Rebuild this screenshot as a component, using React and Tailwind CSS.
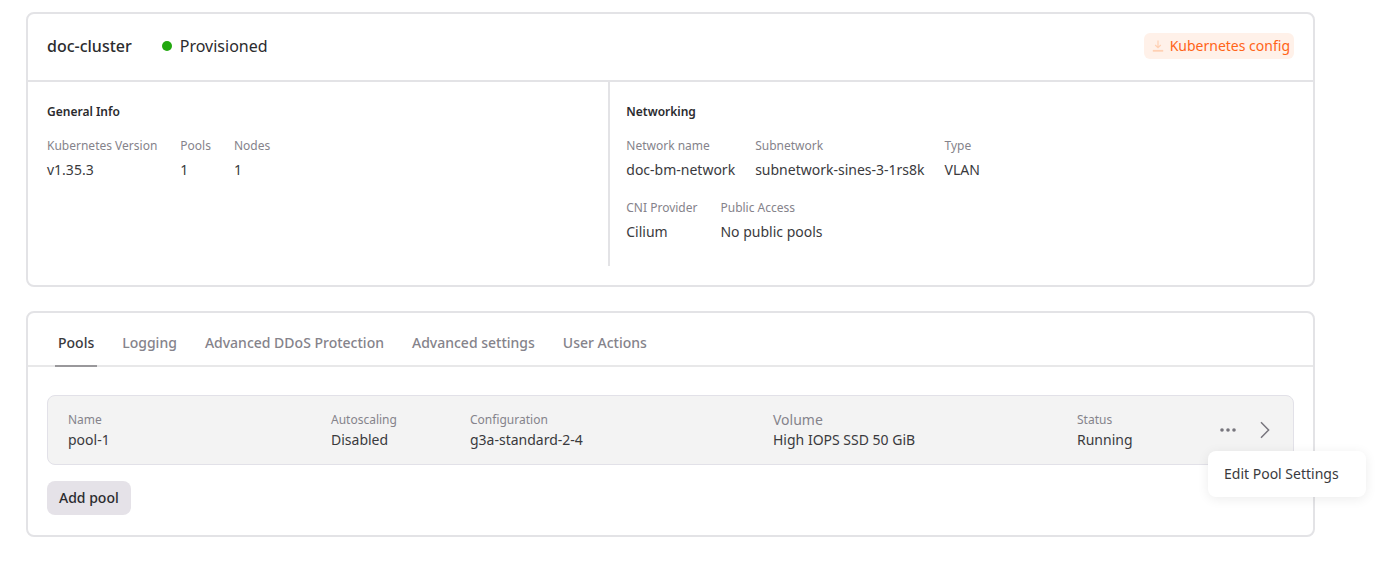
import { useState } from 'react'
import clsx from 'clsx'

const generalInfo = [
  { label: 'Kubernetes Version', value: 'v1.35.3' },
  { label: 'Pools', value: '1' },
  { label: 'Nodes', value: '1' },
]

const networkInfo = [
  { label: 'Network name', value: 'doc-bm-network' },
  { label: 'Subnetwork', value: 'subnetwork-sines-3-1rs8k' },
  { label: 'Type', value: 'VLAN' },
]

const accessInfo = [
  { label: 'CNI Provider', value: 'Cilium' },
  { label: 'Public Access', value: 'No public pools' },
]

const tabs = ['Pools', 'Logging', 'Advanced DDoS Protection', 'Advanced settings', 'User Actions']

const pool = [
  { label: 'Name', value: 'pool-1' },
  { label: 'Autoscaling', value: 'Disabled' },
  { label: 'Configuration', value: 'g3a-standard-2-4' },
  { label: 'Volume', value: 'High IOPS SSD 50 GiB', large: true },
  { label: 'Status', value: 'Running' },
]

function DownloadIcon() {
  return (
    <svg width="12" height="12" viewBox="0 0 12 12" fill="none" stroke="#ffd0b3" strokeWidth="1.2" aria-hidden="true">
      <path d="M6 0.5v7M3.2 5L6 7.7 8.8 5" />
      <path d="M0.8 10.8h10.4" strokeWidth="1.8" />
    </svg>
  )
}

function DotsIcon() {
  return (
    <svg width="16" height="6" viewBox="0 0 16 6" fill="#77757d" aria-hidden="true">
      <circle cx="2" cy="3" r="1.8" />
      <circle cx="8" cy="3" r="1.8" />
      <circle cx="14" cy="3" r="1.8" />
    </svg>
  )
}

function ChevronIcon() {
  return (
    <svg width="10" height="18" viewBox="0 0 10 18" fill="none" stroke="#77757d" strokeWidth="1.5" aria-hidden="true">
      <path d="M1 1.3L8.6 9 1 16.7" />
    </svg>
  )
}

function InfoList({ items, className = 'gap-x-[23px]' }) {
  return (
    <dl className={clsx('flex flex-wrap', className)}>
      {items.map((item) => (
        <div key={item.label}>
          <dt className="text-xs leading-4 text-[#85838b]">{item.label}</dt>
          <dd className="mt-1.5 text-sm leading-5 text-[#3a3a3d]">{item.value}</dd>
        </div>
      ))}
    </dl>
  )
}

export default function App() {
  const [activeTab, setActiveTab] = useState('Pools')
  const [menuOpen, setMenuOpen] = useState(true)

  return (
    <main className="flex flex-col gap-6 bg-white pt-3 pr-[72px] pb-8 pl-[26px] font-['Noto_Sans',sans-serif] text-[#2b2b2e]">
      {/* Cluster summary */}
      <section className="rounded-lg border-2 border-[#e3e3e6] pb-[19px]">
        <header className="flex h-[68px] items-center justify-between border-b-2 border-[#e3e3e6] pr-[19px] pb-0.5 pl-[19px]">
          <div className="flex items-center gap-[30px]">
            <h1 className="text-base leading-5 font-medium">doc-cluster</h1>
            <p className="flex items-center gap-2 text-base leading-5">
              <span className="size-[10px] rounded-full bg-[#22a80f]" />
              Provisioned
            </p>
          </div>
          <button
            type="button"
            className="flex h-[26px] items-center gap-1.5 rounded-md bg-[#fff1e9] pr-1 pl-2 text-sm leading-5 text-[#ff6418]"
          >
            <DownloadIcon />
            Kubernetes config
          </button>
        </header>

        <div className="grid grid-cols-[29fr_35fr]">
          <div className="border-r-2 border-[#e3e3e6] pt-5 pr-5 pb-6 pl-[19px]">
            <h2 className="mb-4 text-xs leading-5 font-semibold">General Info</h2>
            <InfoList items={generalInfo} />
          </div>
          <div className="px-4 pt-5 pb-6">
            <h2 className="mb-4 text-xs leading-5 font-semibold">Networking</h2>
            <InfoList items={networkInfo} className="gap-x-5" />
            <div className="mt-5">
              <InfoList items={accessInfo} />
            </div>
          </div>
        </div>
      </section>

      {/* Tabs and pool list */}
      <section className="rounded-lg border-2 border-[#e3e3e6]">
        <nav className="flex h-[54px] items-stretch gap-[22px] border-b-2 border-[#e8e8e9] pl-[27px]" role="tablist">
          {tabs.map((tab) => (
            <button
              key={tab}
              type="button"
              role="tab"
              aria-selected={activeTab === tab}
              onClick={() => setActiveTab(tab)}
              className={clsx(
                '-mb-0.5 border-b-2 px-[3px] pt-2 text-sm leading-5 font-medium',
                activeTab === tab ? 'border-[#99989b] text-[#3a3a3d]' : 'border-transparent text-[#85838b]'
              )}
            >
              {tab}
            </button>
          ))}
        </nav>

        <div className="px-[19px] pt-7 pb-5">
          <div className="flex h-[70px] items-center rounded-lg border border-[#e2e1e8] bg-[#f3f3f3] pr-3 pl-5">
            <dl className="grid flex-1 grid-cols-[263fr_139fr_303fr_304fr_131fr]">
              {pool.map((field) => (
                <div key={field.label}>
                  <dt className={clsx('leading-5 text-[#85838b]', field.large ? 'text-sm' : 'text-xs')}>
                    {field.label}
                  </dt>
                  <dd className="text-sm leading-5 text-[#3a3a3d]">{field.value}</dd>
                </div>
              ))}
            </dl>
            <div className="relative">
              <button
                type="button"
                aria-label="Pool actions"
                aria-expanded={menuOpen}
                onClick={() => setMenuOpen(!menuOpen)}
                className="flex h-[42px] w-10 items-center justify-center"
              >
                <DotsIcon />
              </button>
              {menuOpen && (
                <div role="menu" className="absolute top-full left-0 rounded-lg bg-white shadow-[0_2px_12px_rgba(0,0,0,0.08)]">
                  <button
                    type="button"
                    role="menuitem"
                    className="h-[46px] w-[158px] px-4 text-left text-sm leading-5 whitespace-nowrap text-[#3a3a3d]"
                  >
                    Edit Pool Settings
                  </button>
                </div>
              )}
            </div>
            <button type="button" aria-label="Open pool" className="flex h-[42px] w-[33px] items-center justify-center">
              <ChevronIcon />
            </button>
          </div>

          <button
            type="button"
            className="mt-4 h-[34px] rounded-lg bg-[#e5e2e8] px-3 text-sm leading-5 font-medium"
          >
            Add pool
          </button>
        </div>
      </section>
    </main>
  )
}
